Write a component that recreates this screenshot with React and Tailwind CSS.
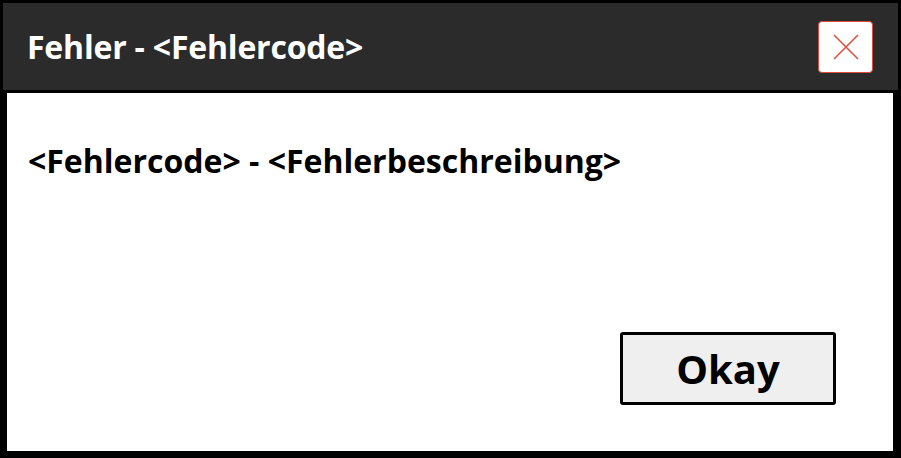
export default function App() {
  return (
    <div className="w-[901px] h-[458px] bg-black flex flex-col" style={{ fontFamily: '"Open Sans", "Noto Sans", sans-serif' }}>
      <div className="mx-[3px] mt-[3px] h-[87px] bg-[#2b2b2b] flex items-center justify-between pl-6 pr-[25px]">
        <h1 className="text-white font-bold text-[32px] leading-none tracking-[-0.2px]">Fehler - &lt;Fehlercode&gt;</h1>
        <button className="w-[55px] h-[52px] bg-white border border-[#e04a3a] rounded-[4px] flex items-center justify-center">
          <svg width="26" height="26" viewBox="0 0 26 26" fill="none" stroke="#e04a3a" strokeWidth="1.5">
            <path d="M1 1 L25 25 M25 1 L1 25" />
          </svg>
        </button>
      </div>
      <div className="ml-[7px] mr-[8px] mt-[3px] mb-[7px] flex-1 bg-white flex flex-col justify-between pl-[21px] pr-[57px] pt-[52px] pb-[46px]">
        <p className="text-black font-bold text-[32px] leading-none">&lt;Fehlercode&gt; - &lt;Fehlerbeschreibung&gt;</p>
        <div className="flex justify-end">
          <button className="w-[216px] h-[73px] bg-[#efefef] border-[3px] border-black rounded-[3px] text-black font-bold text-[40px] leading-none">Okay</button>
        </div>
      </div>
    </div>
  );
}
